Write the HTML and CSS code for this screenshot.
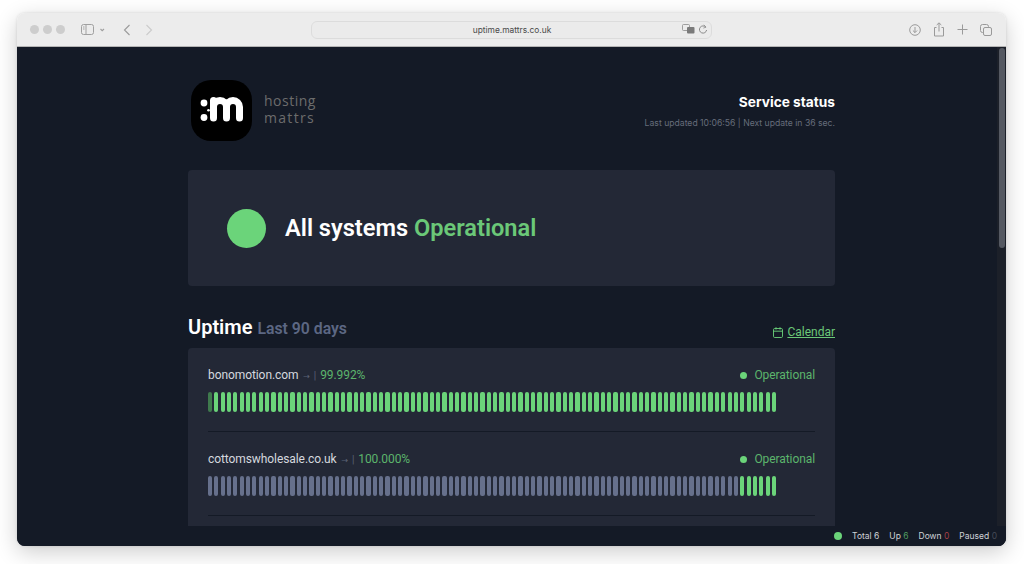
FILE: index.html
```html
<!DOCTYPE html>
<html lang="en">
<head>
  <meta charset="UTF-8">
  <meta name="viewport" content="width=device-width, initial-scale=1.0">
  <title>Service status</title>
  <link rel="stylesheet" href="styles.css">
</head>
<body>
  <div class="window">
    <div class="toolbar">
      <div class="toolbar-left">
        <span class="light"></span>
        <span class="light"></span>
        <span class="light"></span>
        <svg class="sidebar-icon" width="24" height="14" viewBox="0 0 24 14" fill="none" stroke="#a0a0a0">
          <rect x="0.5" y="1.5" width="12" height="10" rx="2"/>
          <path d="M5 1.5v10M2 4h1.5M2 6h1.5"/>
          <path d="M19.5 6l1.7 1.6L23 6" stroke-width="1.2"/>
        </svg>
        <svg class="nav-back" width="8" height="12" viewBox="0 0 8 12" fill="none" stroke="#9a9a9a" stroke-width="1.1">
          <path d="M6.5 1L1.5 6l5 5"/>
        </svg>
        <svg class="nav-forward" width="8" height="12" viewBox="0 0 8 12" fill="none" stroke="#cbcbcb" stroke-width="1.1">
          <path d="M1.5 1l5 5-5 5"/>
        </svg>
      </div>
      <div class="address">
        <span class="url">uptime.mattrs.co.uk</span>
        <svg class="translate-icon" width="13" height="11" viewBox="0 0 13 11">
          <rect x="0.5" y="0.5" width="7" height="6" rx="1" fill="none" stroke="#8a8a8a" stroke-width="0.8"/>
          <rect x="5" y="3" width="7.5" height="6.5" rx="1" fill="#7a7a7a"/>
        </svg>
        <svg class="reload-icon" width="10" height="11" viewBox="0 0 10 11" fill="none" stroke="#8a8a8a">
          <path d="M7.8 3.2A3.6 3.6 0 1 0 8.6 6"/>
          <path d="M5.8 0.8l2.2 2.3-2.6 1" stroke-width="0.8"/>
        </svg>
      </div>
      <div class="toolbar-right">
        <svg width="12" height="12" viewBox="0 0 12 12" fill="none" stroke="#9a9a9a">
          <circle cx="6" cy="6" r="5.3"/>
          <path d="M6 3v5.5M3.9 6.5L6 8.6l2.1-2.1"/>
        </svg>
        <svg width="12" height="15" viewBox="0 0 12 15" fill="none" stroke="#9a9a9a">
          <path d="M3.5 5.5H1.5v8.5h9V5.5H8.5"/>
          <path d="M6 9.5V1M3.7 3L6 .8 8.3 3"/>
        </svg>
        <svg width="11" height="11" viewBox="0 0 11 11" fill="none" stroke="#9a9a9a">
          <path d="M5.5 .5v10M.5 5.5h10"/>
        </svg>
        <svg width="12" height="12" viewBox="0 0 12 12" fill="none" stroke="#9a9a9a">
          <rect x="3.5" y="3.5" width="8" height="8" rx="1.5"/>
          <path d="M3.5 8.5h-1a2 2 0 0 1-2-2v-4a2 2 0 0 1 2-2h4a2 2 0 0 1 2 2v1"/>
        </svg>
      </div>
    </div>

    <div class="page">
      <div class="content">
        <header class="site-header">
          <div class="brand">
            <svg class="logo" width="61" height="61" viewBox="0 0 61 61">
              <rect width="61" height="61" rx="20" fill="#000"/>
              <circle cx="13" cy="23" r="3.4" fill="#fff"/>
              <circle cx="13" cy="37.5" r="3.4" fill="#fff"/>
              <circle cx="17.5" cy="30.2" r="1.3" fill="#fff"/>
              <path d="M22.5 38V20.5M22.5 27a6.5 6.5 0 0 1 13 0v11M35.5 27a6.5 6.5 0 0 1 13 0v11" fill="none" stroke="#fff" stroke-width="7" stroke-linecap="round"/>
            </svg>
            <div class="brand-name">
              <span class="brand-top">hosting</span>
              <span class="brand-bottom">mattrs</span>
            </div>
          </div>
          <div class="service">
            <h1>Service status</h1>
            <p>Last updated 10:06:56 | Next update in 36 sec.</p>
          </div>
        </header>

        <section class="hero">
          <span class="hero-dot"></span>
          <h2>All systems <span class="green">Operational</span></h2>
        </section>

        <div class="uptime-head">
          <h3>Uptime <small>Last 90 days</small></h3>
          <a class="calendar" href="#">
            <svg width="10" height="11" viewBox="0 0 10 11" fill="none" stroke="#6bd47a" stroke-width="0.9">
              <rect x="0.5" y="1.5" width="9" height="9" rx="1.2"/>
              <path d="M0.5 4.2h9M3 .2v2.4M7 .2v2.4"/>
            </svg>
            <span>Calendar</span>
          </a>
        </div>

        <section class="monitors">
          <div class="monitor">
            <div class="monitor-top">
              <div class="monitor-name">bonomotion.com <span class="arrow">→</span> <span class="sep">|</span> <span class="pct">99.992%</span></div>
              <div class="monitor-state"><span class="state-dot"></span>Operational</div>
            </div>
            <div class="bars" data-first="dim" data-grey="0"></div>
          </div>
          <div class="monitor">
            <div class="monitor-top">
              <div class="monitor-name">cottomswholesale.co.uk <span class="arrow">→</span> <span class="sep">|</span> <span class="pct">100.000%</span></div>
              <div class="monitor-state"><span class="state-dot"></span>Operational</div>
            </div>
            <div class="bars" data-grey="84"></div>
          </div>
          <div class="monitor"></div>
        </section>
      </div>

      <div class="scrollbar"><div class="thumb"></div></div>

      <footer class="totals">
        <span class="totals-dot"></span>
        <span>Total 6</span>
        <span>Up <b class="up">6</b></span>
        <span>Down <b class="down">0</b></span>
        <span>Paused <b class="paused">0</b></span>
      </footer>
    </div>
  </div>

  <script src="script.js"></script>
</body>
</html>
```

FILE: styles.css
```css
* {
  box-sizing: border-box;
}
body {
  margin: 0;
  height: 564px;
  padding: 13px 18px 18px 17px;
  background: #fff;
  font-family: Roboto, "Liberation Sans", sans-serif;
  overflow: hidden;
}
.window {
  height: 533px;
  display: flex;
  flex-direction: column;
  border-radius: 8px;
  overflow: hidden;
  box-shadow: 0 6px 22px rgba(0,0,0,0.2), 0 0 3px rgba(0,0,0,0.12);
}

/* browser bar */
.toolbar {
  height: 34px;
  flex: none;
  display: flex;
  align-items: center;
  background: #ececec;
  border-bottom: 1px solid #b4b4b4;
}
.toolbar-left {
  width: 294px;
  flex: none;
  display: flex;
  align-items: center;
  padding-left: 13px;
}
.light {
  width: 9px;
  height: 9px;
  border-radius: 50%;
  background: #cdcdcd;
  margin-right: 4px;
}
.sidebar-icon {
  margin-left: 12px;
}
.nav-back {
  margin-left: 18px;
}
.nav-forward {
  margin-left: 14px;
}
.address {
  width: 401px;
  height: 18px;
  flex: none;
  display: flex;
  align-items: center;
  justify-content: flex-end;
  gap: 3px;
  padding-right: 3px;
  position: relative;
  background: #ebebeb;
  border: 1px solid #dcdcdc;
  border-radius: 6px;
}
.url {
  position: absolute;
  left: 1px;
  right: 0;
  text-align: center;
  font-family: Inter, sans-serif;
  font-size: 8.4px;
  color: #4a4a4a;
}
.toolbar-right {
  flex: 1;
  display: flex;
  align-items: center;
  gap: 12px;
  padding-left: 197px;
}

/* page */
.page {
  flex: 1;
  position: relative;
  overflow: hidden;
  background: #141a26;
}
.content {
  width: 647px;
  margin: 0 auto;
}
.site-header {
  display: flex;
  justify-content: space-between;
  align-items: flex-start;
  padding: 33px 0 0 3px;
  height: 123px;
}
.brand {
  display: flex;
  align-items: center;
  gap: 12px;
}
.logo {
  display: block;
}
.brand-name {
  display: flex;
  flex-direction: column;
  font-family: "Open Sans", sans-serif;
  font-size: 14px;
  font-weight: 500;
  line-height: 17px;
  color: #6c6c6c;
  padding-bottom: 3px;
}
.brand-top {
  letter-spacing: 0.5px;
}
.brand-bottom {
  letter-spacing: 1.3px;
}
.service {
  text-align: right;
  padding-top: 14px;
}
.service h1 {
  margin: 0;
  font-family: Inter, sans-serif;
  font-size: 13.7px;
  line-height: 17px;
  font-weight: 700;
  color: #fff;
}
.service p {
  margin: 6px 0 0;
  font-family: Inter, sans-serif;
  font-size: 8.65px;
  line-height: 12px;
  color: #666d7b;
}

.hero {
  height: 116px;
  display: flex;
  align-items: center;
  gap: 19px;
  padding-left: 39px;
  background: #232836;
  border-radius: 4px;
}
.hero-dot {
  width: 39px;
  height: 39px;
  border-radius: 50%;
  background: #6bd47a;
}
.hero h2 {
  margin: 0;
  font-size: 23.6px;
  font-weight: 600;
  color: #fff;
}
.green {
  color: #6bc878;
}

.uptime-head {
  height: 62px;
  display: flex;
  justify-content: space-between;
  align-items: flex-end;
  padding-bottom: 8px;
}
.uptime-head h3 {
  margin: 0 0 -1px;
  font-size: 20px;
  line-height: 24px;
  font-weight: 600;
  color: #fff;
}
.uptime-head small {
  font-size: 15.8px;
  font-weight: 600;
  color: #5c6783;
}
.calendar {
  display: flex;
  align-items: center;
  gap: 4px;
  font-size: 12px;
  color: #6bc878;
  margin-bottom: 1px;
}

.monitors {
  padding: 0 20px;
  background: #232836;
  border-radius: 4px;
}
.monitor {
  height: 84px;
  padding-top: 19px;
  border-bottom: 1px solid #141a26;
}
.monitor-top {
  display: flex;
  justify-content: space-between;
  align-items: center;
  height: 16px;
  font-size: 12px;
  letter-spacing: -0.08px;
}
.monitor-name {
  color: #d5d8df;
}
.arrow {
  font-family: "DejaVu Sans", sans-serif;
  color: #5c6377;
  font-size: 8px;
  margin-left: 2px;
}
.sep {
  color: #5c6377;
  font-size: 10px;
  margin-left: 1px;
}
.pct {
  color: #5cb56c;
  margin-left: 1px;
}
.monitor-state {
  display: flex;
  align-items: center;
  gap: 7px;
  color: #5cb56c;
}
.state-dot {
  width: 7px;
  height: 7px;
  border-radius: 50%;
  background: #6bd47a;
}
.bars {
  width: 568px;
  height: 20px;
  margin-top: 9px;
  display: grid;
  grid-template-columns: repeat(90, 1fr);
  column-gap: 2.2px;
}
.bar {
  border-radius: 2px;
  background: #6bd47a;
}
.bar.grey {
  background: #66708c;
}
.bar.dim {
  background: #3f7a4d;
}

.scrollbar {
  position: absolute;
  top: 0;
  right: 0;
  bottom: 0;
  width: 9px;
  padding: 1px 1px 0 2px;
  background: #1c2029;
}
.thumb {
  height: 200px;
  border-radius: 3px;
  background: #555962;
}

.totals {
  position: absolute;
  left: 0;
  right: 0;
  bottom: 0;
  height: 20px;
  display: flex;
  justify-content: flex-end;
  align-items: center;
  gap: 10px;
  padding-right: 9px;
  background: #141a26;
  font-family: Inter, sans-serif;
  font-size: 8.5px;
  color: #cfd2d8;
}
.totals b {
  font-weight: 400;
}
.totals-dot {
  width: 8px;
  height: 8px;
  border-radius: 50%;
  background: #6bd47a;
}
.up {
  color: #4f9c60;
}
.down {
  color: #a33f44;
}
.paused {
  color: #444a57;
}
```

FILE: script.js
```js
// 90 days of little bars for each monitor
var rows = document.getElementsByClassName("bars");
for (var i = 0; i < rows.length; i++) {
  var grey = parseInt(rows[i].dataset.grey, 10);
  for (var d = 0; d < 90; d++) {
    var bar = document.createElement("span");
    bar.className = "bar";
    if (d < grey) bar.className += " grey";
    if (d === 0 && rows[i].dataset.first === "dim") bar.className += " dim";
    rows[i].appendChild(bar);
  }
}
```
